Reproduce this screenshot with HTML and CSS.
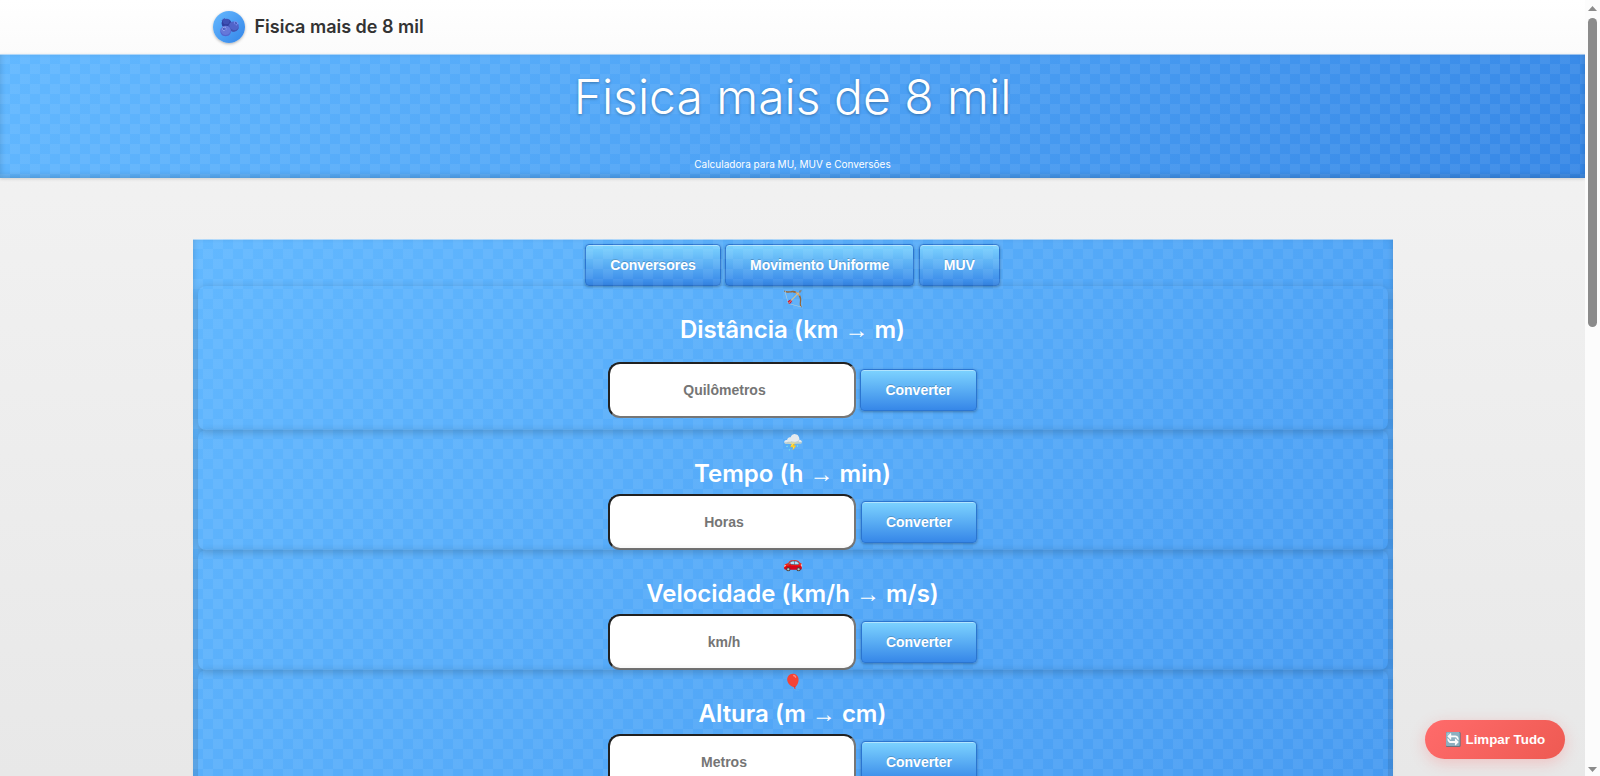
FILE: index.html
```
<!DOCTYPE html>
<html lang="pt-BR">
<head>
<meta charset="utf-8">
<title>Fisica mais de 8 mil</title>
<link rel="stylesheet" href="styles.css">
</head>
<body>
<div class="window">
  <div class="page">
    <nav class="topbar">
      <span class="brand-icon">🫐</span>
      <span class="brand-name">Fisica mais de 8 mil</span>
    </nav>
    <header class="hero">
      <h1>Fisica mais de 8 mil</h1>
      <p>Calculadora para MU, MUV e Conversões</p>
    </header>
    <main class="panel">
      <div class="tabs">
        <button class="btn">Conversores</button>
        <button class="btn">Movimento Uniforme</button>
        <button class="btn">MUV</button>
      </div>
      <section class="card card-first">
        <div class="emoji">🏹</div>
        <h2>Distância (km <span class="arrow">→</span> m)</h2>
        <div class="row"><input placeholder="Quilômetros"><button class="btn">Converter</button></div>
      </section>
      <section class="card">
        <div class="emoji">⛈️</div>
        <h2>Tempo (h <span class="arrow">→</span> min)</h2>
        <div class="row"><input placeholder="Horas"><button class="btn">Converter</button></div>
      </section>
      <section class="card">
        <div class="emoji">🚗</div>
        <h2>Velocidade (km/h <span class="arrow">→</span> m/s)</h2>
        <div class="row"><input placeholder="km/h"><button class="btn">Converter</button></div>
      </section>
      <section class="card">
        <div class="emoji">🎈</div>
        <h2>Altura (m <span class="arrow">→</span> cm)</h2>
        <div class="row"><input placeholder="Metros"><button class="btn">Converter</button></div>
      </section>
    </main>
    <button class="clear">🔄 Limpar Tudo</button>
  </div>
  <div class="scrollbar">
    <svg width="15" height="18" viewBox="0 0 15 18"><path d="M3 11 L7.5 6 L12 11Z" fill="#8b8b8b"/></svg>
    <div class="thumb"></div>
    <svg class="down" width="15" height="18" viewBox="0 0 15 18"><path d="M3 9 L7.5 14 L12 9Z" fill="#8b8b8b"/></svg>
  </div>
</div>
</body>
</html>
```
FILE: styles.css
```
* { box-sizing: border-box; }
body { margin: 0; font-family: Inter, "Liberation Sans", sans-serif; }
.window { display: flex; height: 776px; overflow: hidden; }
.page {
  position: relative;
  flex: 1;
  height: 776px;
  overflow: hidden;
  background: linear-gradient(#f4f4f4, #e8e8e8);
}
.topbar {
  display: flex;
  align-items: center;
  gap: 9.5px;
  height: 54px;
  padding-left: 213px;
  background: linear-gradient(#ffffff, #fbfbfb);
}
.brand-icon {
  display: flex;
  align-items: center;
  justify-content: center;
  width: 32px;
  height: 32px;
  border-radius: 50%;
  font-size: 17px;
  background: linear-gradient(135deg, #66b9ff, #3385e8);
  box-shadow: 0 1px 3px rgba(0, 0, 0, 0.3);
}
.brand-name { font-size: 18px; line-height: 22px; padding-bottom: 1px; font-weight: 600; color: #333; }
.hero, .panel {
  position: relative;
  color: #fff;
  text-align: center;
  background: linear-gradient(135deg, #62b8ff, #4da2f5 50%, #3687e6);
  box-shadow: inset 0 1px 0 rgba(255, 255, 255, 0.5), inset 0 -2px 6px rgba(0, 0, 0, 0.18), 0 1px 3px rgba(0, 0, 0, 0.15);
}
.panel { box-shadow: inset 0 1px 0 rgba(255, 255, 255, 0.5), inset 0 -2px 6px rgba(0, 0, 0, 0.18); }
.hero { height: 124px; }
.hero::before, .panel::before {
  content: "";
  position: absolute;
  inset: 0;
  background: repeating-conic-gradient(transparent 0 25%, rgba(255, 255, 255, 0.06) 0 50%) 0 0 / 20px 20px;
}
.hero h1 {
  position: relative;
  margin: 0;
  padding-top: 13px;
  font-size: 48px;
  line-height: 60px;
  font-weight: 300;
  text-shadow: 0 1px 3px rgba(0, 0, 0, 0.3);
}
.hero p { position: relative; margin: 30px 0 0; font-size: 10px; line-height: 14px; }
.panel {
  width: 1200px;
  height: 1500px;
  margin: 61px 0 0 193px;
  padding: 5px;
}
.tabs { display: flex; justify-content: center; gap: 4.4px; height: 42px; padding-right: 1px; }
.btn {
  height: 42px;
  padding: 0 24px;
  border: 1px solid #2b75d0;
  border-radius: 4px;
  font: bold 14px "Liberation Sans", sans-serif;
  color: #fff;
  text-shadow: 0 -1px 0 rgba(0, 0, 0, 0.2);
  background: linear-gradient(#7dd3ff, #3687e8);
  box-shadow: inset 0 1px 0 rgba(255, 255, 255, 0.4), 0 1px 3px rgba(0, 0, 0, 0.3);
}
.card {
  position: relative;
  height: 120px;
  padding-right: 1px;
  border-radius: 8px;
  box-shadow: 0 2px 8px rgba(0, 0, 0, 0.2);
}
.card-first { height: 144px; }
.emoji { height: 24px; padding-top: 2px; font-size: 16px; line-height: 20px; }
.card h2 { margin: 0; height: 40px; font-size: 24px; line-height: 40px; font-weight: 600; }
.arrow { font-family: "Liberation Sans", sans-serif; line-height: 1; }
.row { display: flex; align-items: center; justify-content: center; gap: 4.9px; }
.card-first .row { gap: 3.9px; padding-top: 12px; }
.row input {
  width: 248px;
  height: 56px;
  padding: 0 16px 0 0;
  border: 2px inset #767676;
  border-radius: 12px;
  font: bold 14px "Liberation Sans", sans-serif;
  text-align: center;
  background: #fff;
}
.clear {
  position: absolute;
  right: 20px;
  bottom: 17px;
  width: 140px;
  height: 39px;
  padding: 0;
  border: 0;
  border-radius: 20px;
  font: bold 13.33px "Liberation Sans", sans-serif;
  color: #fff;
  background: linear-gradient(135deg, #ff6b6b, #ee5a52);
  box-shadow: 0 4px 15px rgba(255, 107, 107, 0.3);
}
.scrollbar { display: flex; flex-direction: column; width: 15px; background: #fcfcfc; }
.thumb { width: 9px; height: 309px; margin-left: 3px; border-radius: 5px; background: #8b8b8b; }
.down { margin-top: auto; }
```
